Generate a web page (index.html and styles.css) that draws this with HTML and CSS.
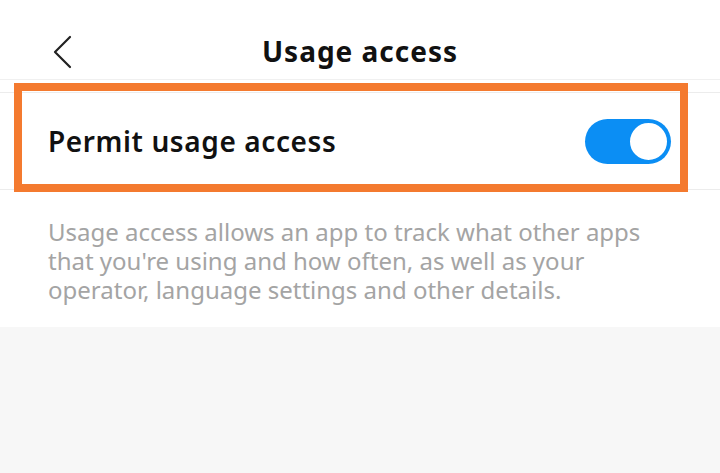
FILE: index.html
```html
<!DOCTYPE html>
<html lang="en">
<head>
  <meta charset="UTF-8">
  <meta name="viewport" content="width=device-width, initial-scale=1.0">
  <title>Usage access</title>
  <link rel="stylesheet" href="styles.css">
</head>
<body>

  <div class="page">
    <header class="top-bar">
      <button type="button" class="back-btn" aria-label="Back">
        <svg width="22" height="34" viewBox="0 0 22 34">
          <path d="M19 2 L4 17 L19 32" fill="none" stroke="#222" stroke-width="2.2" stroke-linecap="round" stroke-linejoin="round"/>
        </svg>
      </button>
      <h1>Usage access</h1>
      <span></span>
    </header>

    <div class="setting-wrap">
      <div class="setting-row">
        <span class="setting-label">Permit usage access</span>
        <span class="switch on"><span class="knob"></span></span>
      </div>
      <div class="highlight"></div>
    </div>

    <p class="summary">Usage access allows an app to track what other apps that you're using and how often, as well as your operator, language settings and other details.</p>
  </div>

</body>
</html>
```

FILE: styles.css
```css
/* Reset default styles */
* {
  margin: 0;
  padding: 0;
  box-sizing: border-box;
}

body {
  font-family: "Noto Sans", "DejaVu Sans", sans-serif;
  background: #f7f7f7;
  width: 720px;
  height: 473px;
  overflow: hidden;
}

.page {
  background: #fff;
}

/* Header */
.top-bar {
  height: 80px;
  padding-top: 22px;
  display: grid;
  grid-template-columns: 1fr auto 1fr;
  align-items: center;
  border-bottom: 1px solid #f0f0f0;
}

.back-btn {
  justify-self: start;
  margin-left: 51px;
  margin-top: 2px;
  background: none;
  border: none;
  display: flex;
}

.top-bar h1 {
  font-size: 28px;
  font-weight: 700;
  color: #111;
  letter-spacing: 1px;
}

/* Setting row */
.setting-wrap {
  position: relative;
  margin-top: 12px;
}

.setting-row {
  height: 98px;
  display: flex;
  align-items: center;
  justify-content: space-between;
  padding: 0 49px 0 48px;
  border-top: 1px solid #ececec;
  border-bottom: 1px solid #ececec;
}

.setting-label {
  font-size: 28px;
  font-weight: 600;
  color: #111;
  letter-spacing: 0.6px;
}

.switch {
  width: 86px;
  height: 45px;
  border-radius: 23px;
  background: #0b8ef4;
  display: flex;
  align-items: center;
  justify-content: flex-end;
  padding: 2px;
}

.knob {
  width: 41px;
  height: 41px;
  border-radius: 50%;
  background: #fff;
  border: 2px solid #0b8ef4;
}

/* Orange annotation box */
.highlight {
  position: absolute;
  top: -9px;
  left: 14px;
  right: 32px;
  bottom: -2px;
  border: 8px solid #f47a2f;
  pointer-events: none;
}

/* Description */
.summary {
  padding: 27px 60px 23px 48px;
  font-size: 24px;
  line-height: 29px;
  color: #a4a4a4;
}
```
